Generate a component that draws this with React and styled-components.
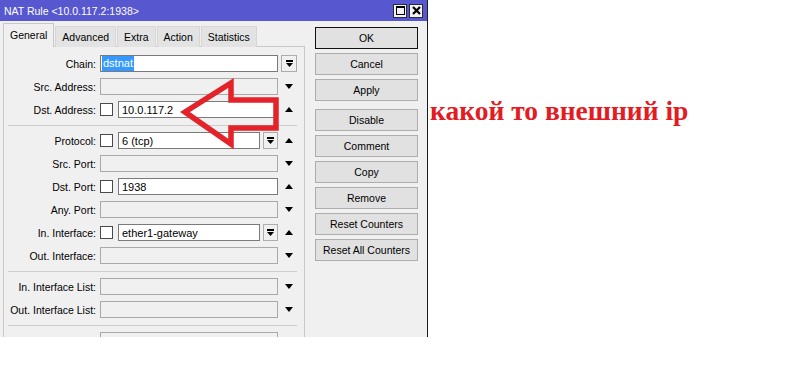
import React from "react";
import styled, { createGlobalStyle } from "styled-components";

const UI_FONT = "10.5px";

const GlobalStyle = createGlobalStyle`
  html, body {
    margin: 0;
    padding: 0;
    background: #ffffff;
  }
  body {
    font-family: "Liberation Sans", Arial, sans-serif;
    font-size: ${UI_FONT};
    color: #000;
  }
`;

const rowsTop = [
  { label: "Chain:", value: "dstnat", selected: true, side: "drop" },
  { label: "Src. Address:", side: "down" },
  { label: "Dst. Address:", value: "10.0.117.2", check: true, side: "up" },
];

const rowsMid = [
  { label: "Protocol:", value: "6 (tcp)", check: true, drop: true, side: "up" },
  { label: "Src. Port:", side: "down" },
  { label: "Dst. Port:", value: "1938", check: true, side: "up" },
  { label: "Any. Port:", side: "down" },
  { label: "In. Interface:", value: "ether1-gateway", check: true, drop: true, side: "up" },
  { label: "Out. Interface:", side: "down" },
];

const rowsLists = [
  { label: "In. Interface List:", side: "down" },
  { label: "Out. Interface List:", side: "down" },
];

const buttons = [
  { text: "OK", primary: true },
  { text: "Cancel" },
  { text: "Apply" },
  { text: "Disable", spaced: true },
  { text: "Comment" },
  { text: "Copy" },
  { text: "Remove" },
  { text: "Reset Counters" },
  { text: "Reset All Counters" },
];

const tabs = ["General", "Advanced", "Extra", "Action", "Statistics"];

function DownIcon() {
  return (
    <svg width="8" height="5" viewBox="0 0 8 5">
      <polygon points="0,0 8,0 4,5" fill="#000" />
    </svg>
  );
}

function UpIcon() {
  return (
    <svg width="8" height="5" viewBox="0 0 8 5">
      <polygon points="0,5 8,5 4,0" fill="#000" />
    </svg>
  );
}

function DropIcon() {
  return (
    <svg width="7" height="8" viewBox="0 0 7 8">
      <rect x="0" y="0" width="7" height="2" fill="#000" />
      <polygon points="0,3 7,3 3.5,7" fill="#000" />
    </svg>
  );
}

function FieldRow({ row }) {
  return (
    <Row>
      <Label>{row.label}</Label>
      <FieldArea>
        {row.check && <Check />}
        <Input $filled={!!row.value}>
          {row.selected ? <Selected>{row.value}</Selected> : <Value>{row.value}</Value>}
        </Input>
        {row.drop && (
          <DropButton $inner>
            <DropIcon />
          </DropButton>
        )}
      </FieldArea>
      <Side>
        {row.side === "drop" && (
          <DropButton>
            <DropIcon />
          </DropButton>
        )}
        {row.side === "down" && <DownIcon />}
        {row.side === "up" && <UpIcon />}
      </Side>
    </Row>
  );
}

export default function App() {
  return (
    <Page>
      <GlobalStyle />
      <Window>
        <TitleBar>
          <span>NAT Rule &lt;10.0.117.2:1938&gt;</span>
          <TitleButtons>
            <TitleButton>
              <MaxBox />
            </TitleButton>
            <TitleButton>
              <svg width="9" height="9" viewBox="0 0 9 9">
                <path d="M1 1 L8 8 M8 1 L1 8" stroke="#000" strokeWidth="2.2" />
              </svg>
            </TitleButton>
          </TitleButtons>
        </TitleBar>
        <Body>
          <TabArea>
            <TabRow>
              {tabs.map((t, i) => (
                <Tab key={t} $active={i === 0}>
                  {t}
                </Tab>
              ))}
            </TabRow>
            <Panel>
              <Group>
                {rowsTop.map((r) => (
                  <FieldRow key={r.label} row={r} />
                ))}
              </Group>
              <Separator />
              <Group>
                {rowsMid.map((r) => (
                  <FieldRow key={r.label} row={r} />
                ))}
              </Group>
              <Separator />
              <Group>
                {rowsLists.map((r) => (
                  <FieldRow key={r.label} row={r} />
                ))}
              </Group>
              <Separator />
              <Group>
                <Row>
                  <Label />
                  <FieldArea>
                    <Input />
                  </FieldArea>
                </Row>
              </Group>
            </Panel>
          </TabArea>
          <ButtonColumn>
            {buttons.map((b) => (
              <Button key={b.text} $primary={b.primary} $spaced={b.spaced}>
                {b.text}
              </Button>
            ))}
          </ButtonColumn>
        </Body>
        {/* red annotation arrow drawn over the dialog */}
        <Arrow width="300" height="160" viewBox="0 0 300 160">
          <polygon
            points="185,112 231,83 231,100 276,100 276,128 231,128 231,144"
            fill="none"
            stroke="#e3222a"
            strokeWidth="5.5"
            strokeLinejoin="miter"
          />
        </Arrow>
      </Window>
      <Note>какой то внешний ір</Note>
    </Page>
  );
}

const Page = styled.div`
  display: flex;
  align-items: flex-start;
  width: 796px;
  height: 378px;
  overflow: hidden;
`;

const Window = styled.div`
  position: relative;
  width: 428px;
  height: 337px;
  box-sizing: border-box;
  background: #f0f0f0;
  border-right: 1px solid #1c1c1c;
  display: flex;
  flex-direction: column;
  flex-shrink: 0;
`;

const TitleBar = styled.div`
  height: 21px;
  background: #5757cf;
  color: #fff;
  display: flex;
  align-items: center;
  padding: 0 4px;
  font-size: ${UI_FONT};
`;

const TitleButtons = styled.div`
  margin-left: auto;
  display: flex;
  gap: 2px;
`;

const TitleButton = styled.div`
  width: 14px;
  height: 14px;
  box-sizing: border-box;
  background: #f2f2f2;
  border: 1px solid #2a2a3a;
  display: flex;
  align-items: center;
  justify-content: center;
`;

const MaxBox = styled.div`
  width: 9px;
  height: 9px;
  box-sizing: border-box;
  border: 1px solid #000;
  border-top-width: 2px;
`;

const Body = styled.div`
  flex: 1;
  display: flex;
  min-height: 0;
`;

const TabArea = styled.div`
  width: 302px;
  margin-left: 3px;
  padding-top: 2px;
  display: flex;
  flex-direction: column;
`;

const TabRow = styled.div`
  display: flex;
  align-items: flex-end;
  gap: 1px;
  height: 24px;
  margin-bottom: -1px;
`;

const Tab = styled.div`
  position: relative;
  z-index: 1;
  box-sizing: border-box;
  height: ${(p) => (p.$active ? "24px" : "21px")};
  padding: ${(p) => (p.$active ? "4px 6px 0" : "3px 6px 0")};
  background: ${(p) => (p.$active ? "#f0f0f0" : "#e3e3e3")};
  border: 1px solid ${(p) => (p.$active ? "#c8c8c8" : "#d6d6d6")};
  border-bottom: none;
  font-size: ${UI_FONT};
  line-height: 14px;
`;

const Panel = styled.div`
  flex: 1;
  box-sizing: border-box;
  border: 1px solid #c8c8c8;
  border-bottom: none;
  padding-top: 8px;
  overflow: hidden;
`;

const Group = styled.div`
  display: flex;
  flex-direction: column;
  gap: 6px;
`;

const Row = styled.div`
  display: flex;
  align-items: center;
  height: 17px;
`;

const Label = styled.div`
  width: 92px;
  text-align: right;
  white-space: nowrap;
  font-size: ${UI_FONT};
`;

const FieldArea = styled.div`
  width: 178px;
  margin-left: 4px;
  display: flex;
  align-items: center;
  height: 17px;
`;

const Check = styled.div`
  width: 13px;
  height: 13px;
  box-sizing: border-box;
  border: 1px solid #4a4a4a;
  background: #fff;
  margin-right: 5px;
  flex-shrink: 0;
`;

const Input = styled.div`
  flex: 1;
  height: 17px;
  box-sizing: border-box;
  border: 1px solid ${(p) => (p.$filled ? "#7a7a7a" : "#a9a9a9")};
  background: ${(p) => (p.$filled ? "#ffffff" : "#f0f0f0")};
  display: flex;
  align-items: center;
  padding-left: 1px;
  overflow: hidden;
  white-space: nowrap;
`;

const Value = styled.span`
  padding-left: 2px;
  font-size: 11px;
`;

const Selected = styled.span`
  background: #3399ff;
  color: #fff;
  line-height: 15px;
  padding: 0 1px;
  font-size: 11px;
`;

const Side = styled.div`
  width: 16px;
  margin-left: 3px;
  height: 17px;
  display: flex;
  align-items: center;
  justify-content: center;
`;

const DropButton = styled.div`
  width: ${(p) => (p.$inner ? "15px" : "16px")};
  height: 17px;
  margin-left: ${(p) => (p.$inner ? "3px" : "0")};
  box-sizing: border-box;
  border: 1px solid #adadad;
  background: #f0f0f0;
  display: flex;
  align-items: center;
  justify-content: center;
  flex-shrink: 0;
`;

const Separator = styled.div`
  height: 1px;
  background: #cdcdcd;
  margin: 7px 7px 6px 4px;
`;

const ButtonColumn = styled.div`
  width: 103px;
  margin-left: 10px;
  padding-top: 6px;
  display: flex;
  flex-direction: column;
  gap: 4px;
`;

const Button = styled.div`
  height: 22px;
  box-sizing: border-box;
  border: 1px solid ${(p) => (p.$primary ? "#111" : "#adadad")};
  background: #e1e1e1;
  display: flex;
  align-items: center;
  justify-content: center;
  font-size: ${UI_FONT};
  margin-top: ${(p) => (p.$spaced ? "4px" : "0")};
`;

const Arrow = styled.svg`
  position: absolute;
  left: 0;
  top: 0;
  pointer-events: none;
`;

const Note = styled.div`
  margin-left: 2px;
  margin-top: 97px;
  font-family: "Liberation Serif", "Times New Roman", serif;
  font-weight: bold;
  font-size: 27.5px;
  line-height: 1;
  color: #e31b23;
  white-space: nowrap;
`;
